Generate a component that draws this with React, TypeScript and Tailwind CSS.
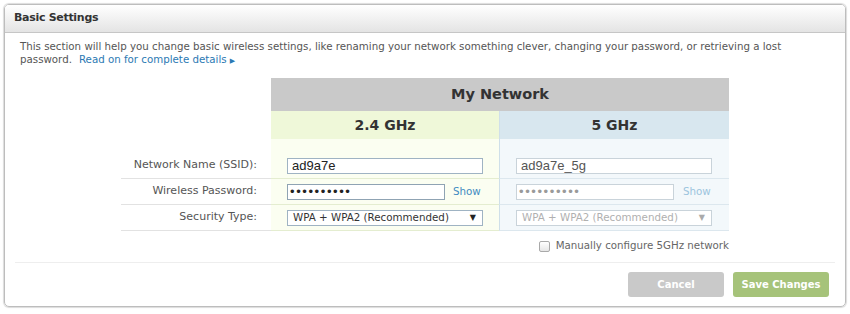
import React from 'react';

// ----------------------------------------------------------------
// Basic Settings panel (router wireless settings)
// ----------------------------------------------------------------
const sans = { fontFamily: '"DejaVu Sans", Verdana, sans-serif' };
const arial = { fontFamily: '"Liberation Sans", Arial, sans-serif' };

function TextBox({ value, disabled, width }: { value: string; disabled?: boolean; width: string }) {
  return (
    <div
      className={`h-[16px] ${width} border ${
        disabled ? 'border-[#c9d3da] text-[#555]' : 'border-[#9fb3c3] text-[#222]'
      } bg-white flex items-center pl-[4px] text-[13px] leading-none`}
      style={arial}
    >
      {value}
    </div>
  );
}

function Dots({ disabled, width }: { disabled?: boolean; width: string }) {
  return (
    <div
      className={`h-[16px] ${width} border ${
        disabled ? 'border-[#c9d3da] text-[#9a9a9a]' : 'border-[#8fa3b3] text-[#222]'
      } bg-white flex items-center pl-[2px] text-[13px] leading-none tracking-[1.6px]`}
      style={arial}
    >
      ••••••••••
    </div>
  );
}

function SelectBox({ disabled }: { disabled?: boolean }) {
  return (
    <div
      className={`h-[16px] w-[196px] border ${
        disabled ? 'border-[#c9d3da] text-[#b0b0b0]' : 'border-[#9fb3c3] text-[#333]'
      } bg-white flex items-center justify-between pl-[5px] pr-[6px] text-[10.3px] leading-none`}
      style={sans}
    >
      <span>WPA + WPA2 (Recommended)</span>
      <span className={`text-[8px] ${disabled ? 'text-[#aaa]' : 'text-[#222]'}`}>▼</span>
    </div>
  );
}

function LabelCell({ children }: { children: React.ReactNode }) {
  return (
    <div className="h-[26px] flex items-center justify-end pr-[14px] text-[11px] text-[#555] border-b border-[#e2e2e2]">
      {children}
    </div>
  );
}

export default function App() {
  return (
    <div className="w-[850px] h-[314px] bg-white pt-[4px] pl-[4px]" style={sans}>
      <div className="w-[842px] h-[303px] rounded-[5px] border border-[#bdbdbd] shadow-[0_0_1px_1px_#dcdcdc] overflow-hidden">
        {/* Header */}
        <div className="h-[28px] bg-gradient-to-b from-white to-[#e4e4e4] border-b border-[#c6c6c6] px-[9px] flex items-center">
          <h2 className="text-[11px] font-bold text-[#333] tracking-[-0.3px]">Basic Settings</h2>
        </div>

        {/* Description */}
        <p className="px-[15px] pt-[7px] text-[10.25px] leading-[13px] text-[#555]">
          This section will help you change basic wireless settings, like renaming your network something clever, changing your password, or retrieving a lost password.
          <span className="text-[#2b79b3] ml-[7px]">
            Read on for complete details <span className="text-[7px]">▶</span>
          </span>
        </p>

        {/* Network table */}
        <div className="mx-auto mt-[10px] w-[608px] grid grid-cols-[150px_228px_230px]">
          <div />
          <div className="col-span-2 h-[33px] bg-[#c9c9c9] flex items-center justify-center text-[14.5px] font-bold text-[#333]">
            My Network
          </div>

          <div />
          <div className="h-[28px] bg-[#eff8d9] flex items-center justify-center text-[14px] font-bold text-[#333]">
            2.4 GHz
          </div>
          <div className="h-[28px] bg-[#d8e7ef] border-l border-[#cfdfe9] flex items-center justify-center text-[14px] font-bold text-[#333]">
            5 GHz
          </div>

          <div className="h-[14px]" />
          <div className="h-[14px] bg-[#fbfef1]" />
          <div className="h-[14px] bg-[#f3f8fb] border-l border-[#cfdfe9]" />

          {/* Network name */}
          <LabelCell>Network Name (SSID):</LabelCell>
          <div className="h-[26px] bg-[#fbfef1] border-b border-[#e4edd0] flex items-center pl-[16px]">
            <TextBox value="ad9a7e" width="w-[196px]" />
          </div>
          <div className="h-[26px] bg-[#f3f8fb] border-l border-[#cfdfe9] border-b border-b-[#dce7ee] flex items-center pl-[16px]">
            <TextBox value="ad9a7e_5g" width="w-[196px]" disabled />
          </div>

          {/* Password */}
          <LabelCell>Wireless Password:</LabelCell>
          <div className="h-[26px] bg-[#fbfef1] border-b border-[#e4edd0] flex items-center pl-[16px] gap-[8px]">
            <Dots width="w-[158px]" />
            <span className="text-[10.3px] text-[#3f8bc2]">Show</span>
          </div>
          <div className="h-[26px] bg-[#f3f8fb] border-l border-[#cfdfe9] border-b border-b-[#dce7ee] flex items-center pl-[16px] gap-[9px]">
            <Dots width="w-[158px]" disabled />
            <span className="text-[10.3px] text-[#9cc4de]">Show</span>
          </div>

          {/* Security type */}
          <LabelCell>Security Type:</LabelCell>
          <div className="h-[26px] bg-[#fbfef1] border-b border-[#e4edd0] flex items-center pl-[16px]">
            <SelectBox />
          </div>
          <div className="h-[26px] bg-[#f3f8fb] border-l border-[#cfdfe9] border-b border-b-[#dce7ee] flex items-center pl-[16px]">
            <SelectBox disabled />
          </div>
        </div>

        {/* Manual 5GHz */}
        <div className="mx-auto w-[608px] mt-[8px] h-[14px] flex items-center justify-end gap-[6px] text-[10.25px] text-[#666]">
          <span className="w-[11px] h-[11px] rounded-[2px] border border-[#a9a9a9] bg-gradient-to-b from-white to-[#e6e6e6]" />
          <span>Manually configure 5GHz network</span>
        </div>

        {/* Footer */}
        <div className="mx-[10px] mt-[9px] border-t border-[#eeeeee]" />
        <div className="mt-[9px] pr-[16px] flex justify-end gap-[9px]">
          <button className="w-[96px] h-[25px] rounded-[3px] bg-[#c9c9c9] text-white text-[10px] font-bold">
            Cancel
          </button>
          <button className="w-[96px] h-[25px] rounded-[3px] bg-[#a6c37a] text-white text-[10px] font-bold">
            Save Changes
          </button>
        </div>
      </div>
    </div>
  );
}
